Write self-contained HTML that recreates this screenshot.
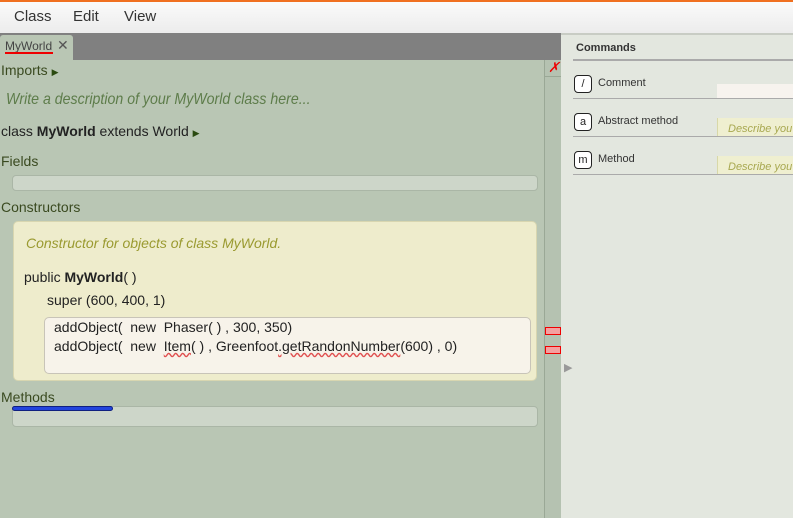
<!DOCTYPE html>
<html><head><style>
*{margin:0;padding:0;box-sizing:border-box}
body{width:793px;height:518px;overflow:hidden;font-family:"Liberation Sans",sans-serif;background:#b9c6b4;position:relative;font-size:14px;color:#222}
.abs{position:absolute}
</style></head><body>
<div class="abs" style="left:0;top:0;width:793px;height:2px;background:#f07020"></div>
<div class="abs" style="left:0;top:2px;width:793px;height:31px;background:linear-gradient(#fafafa,#ececec);font-size:15px;color:#333">
<span class="abs" style="left:14px;top:6px">Class</span>
<span class="abs" style="left:73px;top:6px">Edit</span>
<span class="abs" style="left:124px;top:6px">View</span>
</div>
<div class="abs" style="left:0;top:33px;width:561px;height:27px;background:#808080"></div>
<div class="abs" style="left:0;top:35px;width:73px;height:25px;background:#b9c6b4;border-radius:3px 3px 0 0"></div>
<span class="abs" style="left:5px;top:39px;font-size:12px;color:#444">MyWorld</span>
<div class="abs" style="left:5px;top:52px;width:48px;height:2px;background:#e00"></div>
<span class="abs" style="left:57px;top:37px;font-size:14px;color:#555">✕</span>
<div class="abs" style="left:544px;top:60px;width:1px;height:458px;background:#9aa896"></div>
<div class="abs" style="left:545px;top:60px;width:16px;height:458px;background:#b5c2b1"></div>
<span class="abs" style="left:548px;top:59px;color:#e00;font-size:14px;font-style:italic">✗</span>
<div class="abs" style="left:544px;top:76px;width:17px;height:1px;background:#9aa896"></div>
<span class="abs" style="left:1px;top:62px;font-size:14px;color:#3a4a20">Imports <span style="font-size:9px;color:#2a4a10">▶</span></span>
<span class="abs" style="left:6px;top:91px;font-size:16px;font-style:italic;color:#5d7c4a;transform:scaleX(0.885);transform-origin:left;white-space:nowrap">Write a description of your MyWorld class here...</span>
<span class="abs" style="left:1px;top:123px;font-size:14px">class <b>MyWorld</b> extends World <span style="font-size:9px;color:#2a4a10">▶</span></span>
<span class="abs" style="left:1px;top:153px;color:#3a4a20">Fields</span>
<div class="abs" style="left:12px;top:175px;width:526px;height:16px;background:#cdd6c9;border:1px solid #aab6a6;border-radius:4px"></div>
<span class="abs" style="left:1px;top:199px;color:#3a4a20">Constructors</span>
<div class="abs" style="left:13px;top:221px;width:524px;height:160px;background:#eeeccc;border:1px solid #d8d6b0;border-radius:5px"></div>
<span class="abs" style="left:26px;top:235px;font-size:14px;font-style:italic;color:#9a9a30">Constructor for objects of class MyWorld.</span>
<span class="abs" style="left:24px;top:269px">public <b>MyWorld</b>( )</span>
<span class="abs" style="left:47px;top:292px;font-size:14px">super (600, 400, 1)</span>
<div class="abs" style="left:44px;top:317px;width:487px;height:57px;background:#f7f3ea;border:1px solid #c8c4b8;border-radius:5px"></div>
<span class="abs" style="left:54px;top:319px;font-size:14px;white-space:nowrap">addObject(&nbsp; new&nbsp; Phaser( ) , 300, 350)</span>
<span class="abs" style="left:54px;top:338px;font-size:14px;white-space:nowrap">addObject(&nbsp; new&nbsp; <span style="text-decoration:underline wavy #e05050">Item</span>( ) , Greenfoot<span style="text-decoration:underline wavy #e05050">.getRandonNumber</span>(600) , 0)</span>
<div class="abs" style="left:545px;top:327px;width:16px;height:8px;background:#f4a0a0;border:1px solid #e00"></div>
<div class="abs" style="left:545px;top:346px;width:16px;height:8px;background:#f4a0a0;border:1px solid #e00"></div>
<span class="abs" style="left:1px;top:389px;color:#3a4a20">Methods</span>
<div class="abs" style="left:12px;top:406px;width:526px;height:21px;background:#cdd6c9;border:1px solid #aab6a6;border-radius:4px"></div>
<div class="abs" style="left:12px;top:406px;width:101px;height:5px;background:#2244dd;border:1px solid #102080;border-radius:3px"></div>
<div class="abs" style="left:561px;top:33px;width:232px;height:485px;background:#e3e7df"></div>
<div class="abs" style="left:561px;top:33px;width:232px;height:2px;background:#c8ccc4"></div>
<span class="abs" style="left:564px;top:361px;color:#999;font-size:11px">▶</span>
<span class="abs" style="left:576px;top:42px;font-size:11px;font-weight:bold;color:#333">Commands</span>
<div class="abs" style="left:573px;top:59px;width:220px;height:2px;background:#aaa"></div>
<div class="abs" style="left:574px;top:75px;width:18px;height:18px;border:1px solid #222;border-radius:4px;background:#fff;font-size:11px;text-align:center;line-height:16px">/</div>
<span class="abs" style="left:598px;top:77px;font-size:11px;color:#333">Comment</span>
<div class="abs" style="left:717px;top:84px;width:76px;height:14px;background:#f7f3ee"></div>
<div class="abs" style="left:573px;top:98px;width:220px;height:1px;background:#aaa"></div>
<div class="abs" style="left:574px;top:113px;width:18px;height:18px;border:1px solid #222;border-radius:4px;background:#fff;font-size:11px;text-align:center;line-height:16px">a</div>
<span class="abs" style="left:598px;top:115px;font-size:11px;color:#333">Abstract method</span>
<div class="abs" style="left:717px;top:118px;width:76px;height:19px;background:#efefd0;border-left:1px solid #d8d8a8"></div>
<span class="abs" style="left:728px;top:123px;font-size:11px;font-style:italic;color:#a8a850">Describe you</span>
<div class="abs" style="left:573px;top:136px;width:220px;height:1px;background:#aaa"></div>
<div class="abs" style="left:574px;top:151px;width:18px;height:18px;border:1px solid #222;border-radius:4px;background:#fff;font-size:11px;text-align:center;line-height:16px">m</div>
<span class="abs" style="left:598px;top:153px;font-size:11px;color:#333">Method</span>
<div class="abs" style="left:717px;top:156px;width:76px;height:19px;background:#efefd0;border-left:1px solid #d8d8a8"></div>
<span class="abs" style="left:728px;top:161px;font-size:11px;font-style:italic;color:#a8a850">Describe you</span>
<div class="abs" style="left:573px;top:174px;width:220px;height:1px;background:#aaa"></div>
</body></html>
